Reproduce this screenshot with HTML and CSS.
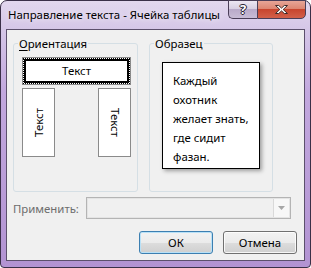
FILE: index.html
```html
<!DOCTYPE html>
<html lang="ru">
<head>
<meta charset="utf-8">
<title>Направление текста</title>
<link rel="stylesheet" href="styles.css">
</head>
<body>
<div class="window">
  <div class="titlebar">
    <span class="title">Направление текста - Ячейка таблицы</span>
    <div class="caption-buttons">
      <div class="cap-btn help"><span>?</span></div>
      <div class="cap-btn close">
        <svg width="17" height="11" viewBox="0 0 17 11"><path d="M2.5 1.5h3.2l2.8 2.6 2.8-2.6h3.2l-4.3 4 4.3 4h-3.2l-2.8-2.6-2.8 2.6h-3.2l4.3-4z" fill="#fff" stroke="#3d2a28" stroke-width="1" stroke-linejoin="round"/></svg>
      </div>
    </div>
  </div>
  <div class="client">
    <div class="groups">
      <fieldset class="group orient">
        <legend><u>О</u>риентация</legend>
        <div class="group-body orient-body">
          <div class="hbtn"><span class="hsel">Текст</span></div>
          <div class="vrow">
            <div class="vbtn"><span class="vtext up">Текст</span></div>
            <div class="vbtn"><span class="vtext down">Текст</span></div>
          </div>
        </div>
      </fieldset>
      <fieldset class="group sample">
        <legend>Образец</legend>
        <div class="group-body sample-body">
          <div class="sample-box">Каждый<br>охотник<br>желает знать,<br>где сидит<br>фазан.</div>
        </div>
      </fieldset>
    </div>
    <div class="apply-row">
      <span class="apply-label">Применить:</span>
      <div class="combo"><div class="combo-arrow"><svg width="7" height="4" viewBox="0 0 7 4"><path d="M0 0h7L3.5 4z" fill="#a6a6a6"/></svg></div></div>
    </div>
    <div class="btn-row">
      <div class="btn default">ОК</div>
      <div class="btn">Отмена</div>
    </div>
  </div>
</div>
</body>
</html>
```

FILE: styles.css
```css
html, body {
  margin: 0;
  padding: 0;
  background: #ffffff;
}
body {
  font-family: "Noto Sans", "Open Sans", sans-serif;
  font-size: 11.4px;
  color: #000;
}
.window {
  width: 311px;
  height: 268px;
  box-sizing: border-box;
  border: 1px solid #3a3048;
  border-radius: 7px 7px 4px 4px;
  background: linear-gradient(180deg, #e2d8ee 0px, #d6c8e8 26px, #c2a8de 90px, #b293d2 268px);
  padding: 0 5px 6px 5px;
  display: flex;
  flex-direction: column;
}
.titlebar {
  height: 28px;
  flex: none;
  display: flex;
  align-items: flex-start;
}
.title {
  margin-top: 6px;
  margin-left: 2px;
  font-size: 11.4px;
  line-height: 16px;
  color: #000;
  white-space: nowrap;
  text-shadow: 0 0 6px rgba(255,255,255,0.9);
}
.caption-buttons {
  margin-left: auto;
  margin-right: -1px;
  margin-top: -1px;
  display: flex;
}
.cap-btn {
  height: 19px;
  box-sizing: border-box;
  border: 1px solid #4a3e58;
  display: flex;
  align-items: center;
  justify-content: center;
}
.cap-btn.help {
  width: 29px;
  border-right: none;
  border-radius: 0 0 0 5px;
  background: linear-gradient(180deg, #ece6f2 0%, #d8cfe2 45%, #b9aac9 50%, #c8bcd6 100%);
  color: #fff;
  font-family: "Noto Sans", sans-serif;
  font-weight: bold;
  font-size: 13px;
  line-height: 1;
  text-shadow: 0 0 1px #2a2234, 1px 0 0 #2a2234, -1px 0 0 #2a2234, 0 1px 0 #2a2234, 0 -1px 0 #2a2234;
}
.cap-btn.close {
  width: 49px;
  border-radius: 0 0 5px 0;
  background: linear-gradient(180deg, #e7a597 0%, #dc8672 45%, #c8452e 50%, #d2604a 100%);
}
.client {
  flex: 1;
  border: 1px solid #5c506c;
  background: #f0f0f0;
  display: flex;
  flex-direction: column;
  padding: 6px 7px 0 6px;
}
.groups {
  display: flex;
  gap: 11px;
}
.group {
  margin: 0;
  padding: 0;
  border: 1px solid #d5dfe5;
  border-radius: 3px;
  min-width: 0;
  box-sizing: border-box;
  height: 156px;
}
.group legend {
  padding: 0 1px;
  margin-left: 4px;
  line-height: 15px;
}
.group u {
  text-decoration-thickness: 1px;
  text-underline-offset: 2px;
}
.orient {
  width: 125px;
}
.sample {
  width: 124px;
}
.orient-body {
  padding: 6px 0 0 8px;
}
.sample-body {
  padding: 11px 0 0 12px;
}
.hbtn {
  width: 109px;
  height: 28px;
  box-sizing: border-box;
  border: 1px solid #8a8a8a;
  background: #fff;
  padding: 1px;
  display: flex;
}
.hsel {
  flex: 1;
  border: 2px solid #000;
  outline: 1px dotted #000;
  display: flex;
  align-items: center;
  justify-content: center;
  line-height: 14px;
}
.vrow {
  display: flex;
  justify-content: space-between;
  width: 109px;
  margin-top: 3px;
}
.vbtn {
  width: 33px;
  height: 69px;
  box-sizing: border-box;
  border: 1px solid #8a8a8a;
  background: #fff;
  display: flex;
  align-items: center;
  justify-content: center;
}
.vtext {
  writing-mode: vertical-rl;
  line-height: 14px;
}
.vtext.up {
  transform: rotate(180deg);
}
.sample-box {
  width: 98px;
  height: 107px;
  box-sizing: border-box;
  border: 1px solid #000;
  background: #fff;
  box-shadow: 2px 2px 4px rgba(0,0,0,0.35);
  padding: 8px 0 0 10px;
  line-height: 19px;
  white-space: nowrap;
}
.apply-row {
  display: flex;
  align-items: center;
  margin-top: 5px;
  margin-right: 6px;
}
.apply-label {
  color: #6d6d6d;
  width: 73px;
  flex: none;
}
.combo {
  flex: 1;
  height: 22px;
  box-sizing: border-box;
  border: 1px solid #b4b4b4;
  box-shadow: inset 0 0 0 1px #e4e4e4;
  background: #f0f0f0;
  display: flex;
  justify-content: flex-end;
}
.combo-arrow {
  width: 15px;
  margin: 1px;
  border-left: 1px solid #d9d9d9;
  background: #f7f7f7;
  display: flex;
  align-items: center;
  justify-content: center;
}
.btn-row {
  display: flex;
  justify-content: flex-end;
  gap: 10px;
  margin-top: 12px;
}
.btn {
  width: 74px;
  height: 23px;
  box-sizing: border-box;
  border: 1px solid #707070;
  border-radius: 3px;
  background: linear-gradient(180deg, #f2f2f2 0%, #ebebeb 50%, #dddddd 51%, #cfcfcf 100%);
  box-shadow: inset 0 0 0 1px rgba(255,255,255,0.8);
  display: flex;
  align-items: center;
  justify-content: center;
  line-height: 14px;
}
.btn.default {
  border-color: #3c7fb1;
  box-shadow: inset 0 0 0 1px #b9e1f7;
}
```
